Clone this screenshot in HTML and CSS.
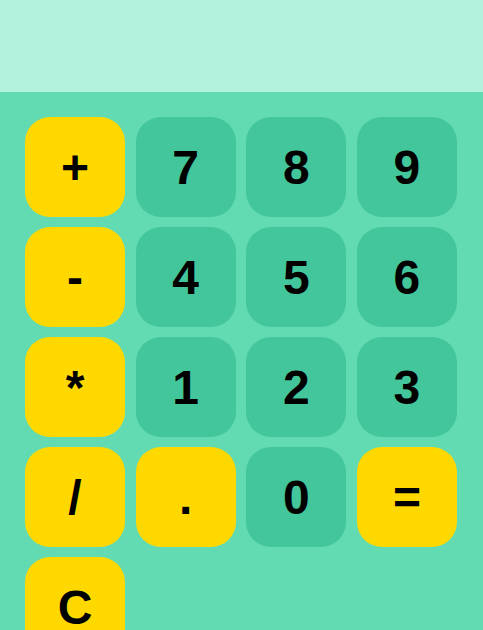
FILE: index.html
```html
<!DOCTYPE html>
<html>
<head>
<meta charset="utf-8">
<link rel="stylesheet" href="styles.css">
</head>
<body>
<div class="display"></div>
<div class="keys">
  <button class="key op">+</button>
  <button class="key">7</button>
  <button class="key">8</button>
  <button class="key">9</button>
  <button class="key op">-</button>
  <button class="key">4</button>
  <button class="key">5</button>
  <button class="key">6</button>
  <button class="key op">*</button>
  <button class="key">1</button>
  <button class="key">2</button>
  <button class="key">3</button>
  <button class="key op">/</button>
  <button class="key op">.</button>
  <button class="key">0</button>
  <button class="key op">=</button>
  <button class="key op">C</button>
</div>
</body>
</html>
```
FILE: styles.css
```css
html, body {
  margin: 0;
  padding: 0;
  background: #62dab2;
  font-family: "Liberation Sans", Arial, sans-serif;
}
.display {
  height: 92px;
  background: #b3f3dd;
}
.keys {
  display: grid;
  grid-template-columns: repeat(4, 100px);
  column-gap: 10.67px;
  row-gap: 10px;
  padding: 25px 0 25px 25px;
}
.key {
  width: 100px;
  height: 100px;
  border: none;
  border-radius: 25px;
  background: #43c69b;
  color: #000;
  font-family: "Liberation Sans", Arial, sans-serif;
  font-weight: bold;
  font-size: 48px;
  padding: 0;
  display: flex;
  align-items: center;
  justify-content: center;
}
.key.op {
  background: #ffd800;
}
```
